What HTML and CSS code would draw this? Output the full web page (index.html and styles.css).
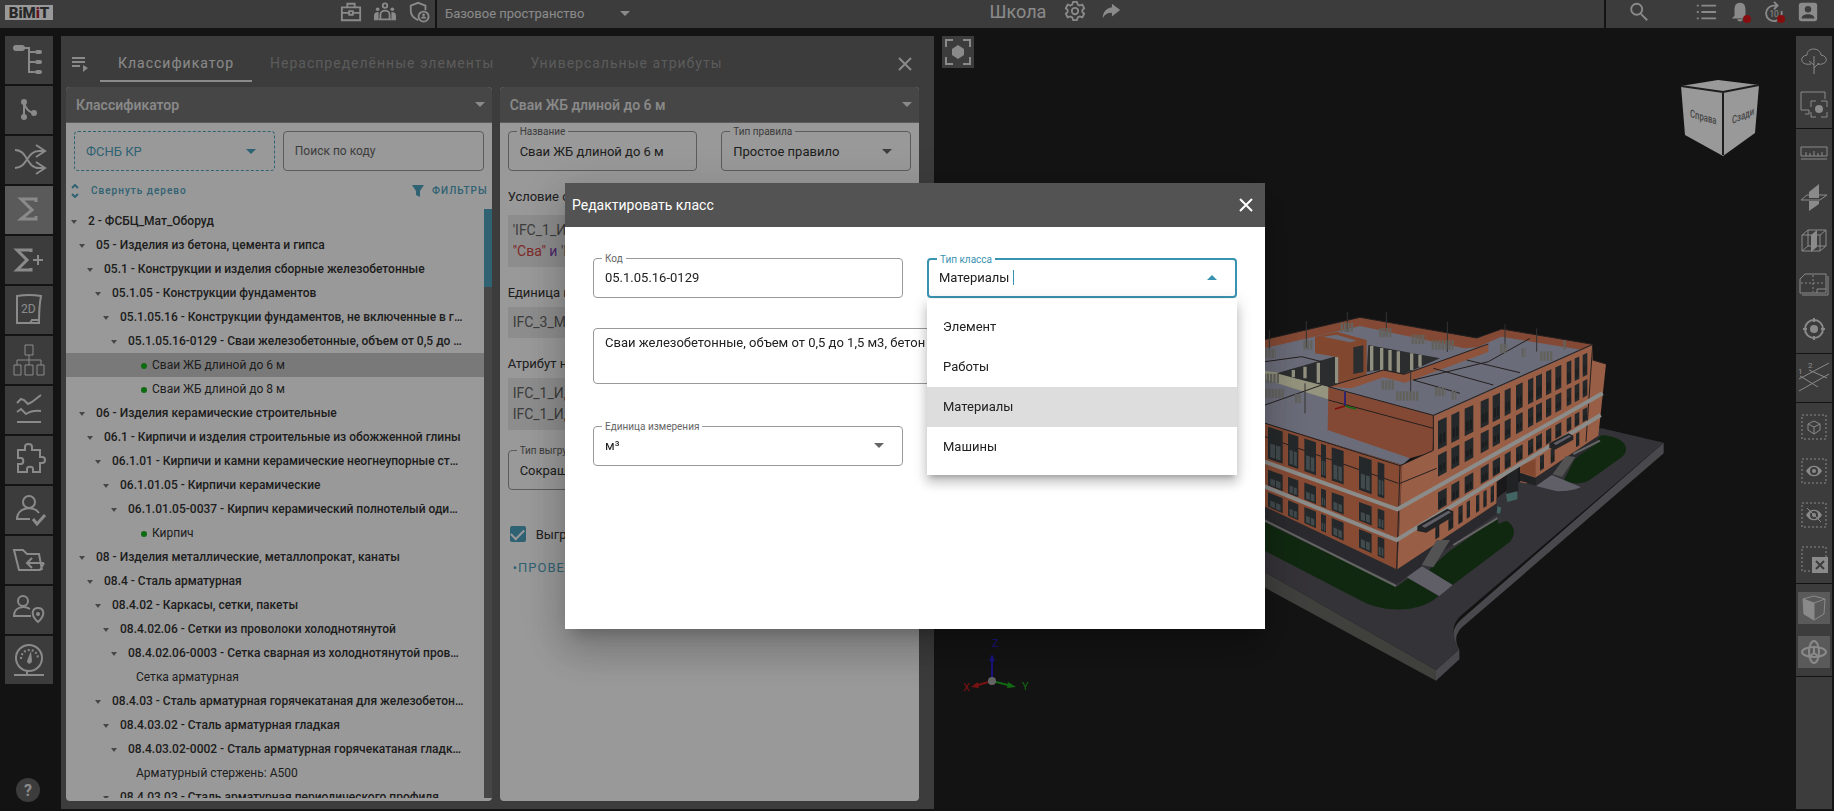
FILE: index.html
```html
<!DOCTYPE html>
<html lang="ru">
<head>
    <meta charset="UTF-8">
    <meta name="viewport" content="width=device-width, initial-scale=1.0">
    <title>BiMiT</title>
    <link rel="stylesheet" href="styles.css">
</head>
<body>
    <div class="app">
        <header class="topbar">
            <div class="topbar-left">
                <a class="logo" href="#">B<span>i</span>M<span class="dot-i">i</span>T</a>
                <div class="topbar-icons">
                    <button aria-label="Портфель"><svg viewBox="0 0 24 24"><path d="M2 7h20v14H2zM8 7V3h8v4M2 13h8M14 13h8M10 11h4v4h-4z"/></svg></button>
                    <button aria-label="Команда"><svg viewBox="0 0 24 24"><circle cx="12" cy="5" r="2.500"/><path d="M7 20v-5c0-6 10-6 10 0v5M5 20h14" /><path class="fill" d="M0 21v-5c0-3 2-4 5-4v9zM24 21v-5c0-3-2-4-5-4v9z"/><circle class="fill" cx="4" cy="9" r="2"/><circle class="fill" cx="20" cy="9" r="2"/></svg></button>
                    <button aria-label="Безопасность"><svg viewBox="0 0 24 24"><path d="M11 21C5 18 3 15 3 11V5l8-3 8 3v5"/><circle cx="17" cy="17" r="5.500"/><circle class="fill" cx="17" cy="15" r="1.500"/><path class="fill" d="M14 19c1-3 5-3 6 0z"/></svg></button>
                </div>
            </div>
            <button class="space">Базовое пространство <i class="tri"></i></button>
            <div class="project">
                <span>Школа</span>
                <button aria-label="Настройки"><svg viewBox="0 0 24 24"><path d="M10 2h4l1 3 2 1 3-1 2 4-2 2v2l2 2-2 4-3-1-2 1-1 3h-4l-1-3-2-1-3 1-2-4 2-2v-2L2 9l2-4 3 1 2-1z"/><circle cx="12" cy="12" r="3.500"/></svg></button>
                <button aria-label="Поделиться"><svg viewBox="0 0 24 24"><path class="fill" d="M13 4l9 7-9 7v-4c-5 0-8 2-10 6 0-7 4-11 10-12z"/></svg></button>
            </div>
            <div class="topbar-right">
                <button class="search" aria-label="Поиск"><svg viewBox="0 0 24 24"><circle cx="9.500" cy="9" r="6"/><path d="M14 14l7 7"/></svg></button>
                <button aria-label="Список"><svg viewBox="0 0 24 24"><path d="M7 5h16M7 12h16M7 19h16M2 5h2M2 12h2M2 19h2"/></svg></button>
                <button aria-label="Уведомления"><svg viewBox="0 0 24 24"><path class="fill" d="M12 2c5 0 6 4 6 8v6l3 3H3l3-3v-6c0-4 1-8 6-8zM9 20h6c0 3-6 3-6 0z"/></svg><i class="badge"></i></button>
                <button aria-label="История"><svg viewBox="0 0 24 24"><path d="M12 5a8.500 8.500 0 1 0 8 6M12 5h3M12 1l4 4-4 4"/><text x="7" y="17">10</text></svg><i class="badge"></i></button>
                <button aria-label="Профиль"><svg viewBox="0 0 24 24"><rect class="fill" x="2" y="2" width="20" height="20" rx="3"/><circle class="hole" cx="12" cy="9" r="3.500"/><path class="hole" d="M5 19c0-6 14-6 14 0z"/></svg></button>
            </div>
        </header>

        <main class="workspace">
            <nav class="sidebar">
                <button aria-label="Структура"><svg viewBox="0 0 48 48"><rect class="fill" x="8" y="9" width="12" height="6" rx="3"/><path d="M18 12h6v24h6M24 16h6M24 26h6"/><rect class="fill" x="30" y="14" width="7" height="4" rx="2"/><rect class="fill" x="30" y="24" width="7" height="4" rx="2"/><rect class="fill" x="30" y="34" width="7" height="4" rx="2"/></svg></button>
                <button aria-label="Ветви"><svg viewBox="0 0 48 48"><path d="M19 16v15M19 16q2 9 9 11"/><circle class="fill" cx="19" cy="16" r="3"/><circle class="fill" cx="19" cy="31" r="3"/><circle class="fill" cx="29" cy="27" r="3"/></svg></button>
                <button aria-label="Сопоставление"><svg viewBox="0 0 48 48"><path d="M10 14c13 0 11 18 24 18h5M10 32c13 0 11-17 24-17h5M31 9l9 6-9 6M31 26l9 6-9 6"/></svg></button>
                <button class="active" aria-label="Классификатор"><svg viewBox="0 0 48 48"><path class="thick" d="M31 16v-3H16l11 11-11 9h15v-3"/></svg></button>
                <button aria-label="Добавить сумму"><svg viewBox="0 0 48 48"><path class="thick" d="M26 16v-2H12l10 10-10 10h14v-2"/><path d="M28 24h10M33 19v10"/></svg></button>
                <button aria-label="2D"><svg viewBox="0 0 48 48"><path d="M12 10q12-2 24 0-2 10-2 27H12zM25 37l2-3h7"/><text x="16" y="27">2D</text></svg></button>
                <button aria-label="Схема"><svg class="thin" viewBox="0 0 48 48"><path d="M20 9h8v10h-8zM24 19v10M12 29v-5h24v5M9 29h7v10H9zM20 29h8v10h-8zM32 29h7v10h-7z"/></svg></button>
                <button aria-label="Графики"><svg viewBox="0 0 48 48"><path d="M12 17l4-4 3 1 4 4 4-2 9-7M12 26l4-3 5 5q6-4 15-3M12 36h24"/></svg></button>
                <button aria-label="Модули"><svg viewBox="0 0 48 48"><path d="M13 14h7v-3c0-4 7-4 7 0v3h8v7h2c4 0 4 6 0 6h-2v9h-7v-3c0-3-6-3-6 0v3h-9v-8h3c3 0 3-6 0-6h-3z"/></svg></button>
                <button aria-label="Проверка"><svg viewBox="0 0 48 48"><circle cx="24" cy="16" r="6"/><path d="M25 33H12c0-12 17-14 22-6"/><path class="thick" d="M28 33l4 5 8-9"/></svg></button>
                <button aria-label="Файлы"><svg viewBox="0 0 48 48"><path d="M39 27l-4 7H14L9 14h9l4 4h12l3 16M39 27H22M27 22l-5 5 5 5"/></svg></button>
                <button aria-label="Исполнители"><svg viewBox="0 0 48 48"><circle cx="18" cy="15" r="5"/><path d="M26 30H9c0-9 10-11 16-7M33 36c-9-8-5-14 0-14s9 6 0 14z"/><circle class="fill" cx="33" cy="28" r="2"/></svg></button>
                <button aria-label="Показатели"><svg viewBox="0 0 48 48"><circle cx="24" cy="22" r="13"/><path d="M22 35v4M9 39h30"/><path class="dash" d="M16 23c0-12 17-12 17 0"/><path class="fill" d="M26 15l1 10c-1 4-5 3-5 0z"/></svg></button>
                <button class="help" aria-label="Справка">?</button>
            </nav>

            <section class="panel">
                <div class="tabs">
                    <button class="tabs-menu" aria-label="Меню"><svg viewBox="0 0 16 16"><path d="M0 2h13M0 6h13M0 10h8"/><path class="fill" d="M11 9l5 3-5 4z"/></svg></button>
                    <button class="tab active">Классификатор</button>
                    <button class="tab">Нераспределённые элементы</button>
                    <button class="tab">Универсальные атрибуты</button>
                    <button class="close" aria-label="Закрыть"><svg viewBox="0 0 14 14"><path d="M1 1l12 12M13 1L1 13"/></svg></button>
                </div>
                <div class="cards">
                    <section class="card card-tree">
                        <h2>Классификатор <i class="tri"></i></h2>
                        <div class="filters">
                            <div class="field dashed">
                                <select aria-label="Классификатор"><option>ФСНБ КР</option></select>
                                <i class="tri"></i>
                            </div>
                            <div class="field">
                                <input type="text" placeholder="Поиск по коду" aria-label="Поиск по коду">
                            </div>
                        </div>
                        <div class="tree-tools">
                            <button class="collapse"><svg viewBox="0 0 8 14"><path d="M1 4l3-3 3 3M1 10l3 3 3-3"/></svg>Свернуть дерево</button>
                            <button class="filter"><svg viewBox="0 0 12 12"><path class="fill" d="M0 0h12L8 6v6l-4-2V6z"/></svg>ФИЛЬТРЫ</button>
                        </div>
                        <div class="tree-wrap">
                            <ul class="tree">
                                <li class="l0">2 - ФСБЦ_Мат_Оборуд</li>
                                <li class="l1">05 - Изделия из бетона, цемента и гипса</li>
                                <li class="l2">05.1 - Конструкции и изделия сборные железобетонные</li>
                                <li class="l3">05.1.05 - Конструкции фундаментов</li>
                                <li class="l4">05.1.05.16 - Конструкции фундаментов, не включенные в группы</li>
                                <li class="l5">05.1.05.16-0129 - Сваи железобетонные, объем от 0,5 до 1,5 м3</li>
                                <li class="leaf rule selected">Сваи ЖБ длиной до 6 м</li>
                                <li class="leaf rule">Сваи ЖБ длиной до 8 м</li>
                                <li class="l1">06 - Изделия керамические строительные</li>
                                <li class="l2">06.1 - Кирпичи и изделия строительные из обожженной глины</li>
                                <li class="l3">06.1.01 - Кирпичи и камни керамические неогнеупорные строительные</li>
                                <li class="l4">06.1.01.05 - Кирпичи керамические</li>
                                <li class="l5">06.1.01.05-0037 - Кирпич керамический полнотелый одинарный</li>
                                <li class="leaf rule">Кирпич</li>
                                <li class="l1">08 - Изделия металлические, металлопрокат, канаты</li>
                                <li class="l2">08.4 - Сталь арматурная</li>
                                <li class="l3">08.4.02 - Каркасы, сетки, пакеты</li>
                                <li class="l4">08.4.02.06 - Сетки из проволоки холоднотянутой</li>
                                <li class="l5">08.4.02.06-0003 - Сетка сварная из холоднотянутой проволоки</li>
                                <li class="leaf">Сетка арматурная</li>
                                <li class="l3">08.4.03 - Сталь арматурная горячекатаная для железобетонных</li>
                                <li class="l4">08.4.03.02 - Сталь арматурная гладкая</li>
                                <li class="l5">08.4.03.02-0002 - Сталь арматурная горячекатаная гладкая</li>
                                <li class="leaf">Арматурный стержень: А500</li>
                                <li class="l4">08.4.03.03 - Сталь арматурная периодического профиля</li>
                            </ul>
                            <div class="scroll"><i></i></div>
                        </div>
                    </section>

                    <section class="card card-rule">
                        <h2>Сваи ЖБ длиной до 6 м <i class="tri"></i></h2>
                        <div class="rule-body">
                            <div class="rule-row">
                                <div class="field">
                                    <label for="name">Название</label>
                                    <input id="name" type="text" value="Сваи ЖБ длиной до 6 м">
                                </div>
                                <div class="field">
                                    <label for="kind">Тип правила</label>
                                    <select id="kind"><option>Простое правило</option></select>
                                    <i class="tri"></i>
                                </div>
                            </div>
                            <h3>Условие отбора</h3>
                            <div class="code">'IFC_1_Имя' =<br><span class="str">"Сва"</span> <span class="op">и</span> 'IFC_1'</div>
                            <h3>Единица измерения</h3>
                            <div class="code">IFC_3_Материал</div>
                            <h3>Атрибут наименования</h3>
                            <div class="code">IFC_1_Идентификатор<br>IFC_1_Идентификатор</div>
                            <div class="field export">
                                <label for="export">Тип выгрузки</label>
                                <select id="export"><option>Сокращённый</option></select>
                            </div>
                            <label class="check"><input type="checkbox" checked>Выгружать</label>
                            <button class="verify">•ПРОВЕРИТЬ</button>
                        </div>
                    </section>
                </div>
            </section>

            <section class="viewer">
                <button class="focus" aria-label="Фокус"><svg viewBox="0 0 32 32"><path d="M4 11V4h7M21 4h7v7M28 21v7h-7M11 28H4v-7"/><path class="fill" d="M16 9l6 4v6l-6 4-6-4v-6z"/></svg></button>
                <svg class="cube" viewBox="0 0 80 78">
                    <path class="face" d="M1 7L38 1l41 5-4 48-32 23L5 56z"/>
                    <path class="edge" d="M1 7l42 6 36-7M43 13v63"/>
                    <text transform="matrix(.7 .2 0 1 10 38)">Справа</text>
                    <text transform="matrix(.7 -.3 0 1 52 45)">Сзади</text>
                </svg>
                <svg class="model" viewBox="0 0 1320 1200">
                    <!-- ground slab -->
                    <path fill="#6b6b67" d="M60 838L588 1140v32L60 885z"/>
                    <path fill="#7b7b80" d="M588 1140l70-62v30l-70 64zM658 1085c-25-45-25-70 10-100L1271 458v32L680 1000c-40 30-35 55-22 80z"/>
                    <path fill="#58555d" d="M60 600L1085 415l186 43L668 972c-35 30-35 62-10 106l-70 62L60 838z"/>
                    <path fill="#1b431b" d="M60 690l410 200 35-25 90 53c-50 50-160 52-230 15L60 775zM770 685c50 5 65 40 40 70L638 885l-72-45 60-55zM1085 435c70 5 88 40 62 65l-95 68c-20 16-55 16-80 2l30-60z"/>
                    <path fill="#a09fae" d="M500 862l45-34 93 57-40 33zM885 588l45-35 92 38c-30 18-110 16-137-3z"/>
                    <!-- plinth and facades -->
                    <path fill="#47474d" d="M60 640l410 198 605-401v20L470 882 60 684z"/>
                    <path class="strip" d="M60 684l408 204M640 765l145-88M1000 492l80-40"/>
                    <path fill="#e17d58" d="M60 395l427 130-17 313L60 643z"/>
                    <path fill="#ff9e76" d="M487 525l93-45V378l478-213v45l40 12-23 215-305 203-298 198z"/>
                    <path fill="#2a2a2e" d="M770 575l70-48v95l-70 45z"/>
                    <path fill="#58555d" d="M770 665l0-40 65-50 50 12 60 15-70 60-100 40z"/>
                    <path fill="#d9784f" d="M840 527l47-20v55l-47-15z"/>
                    <path fill="#38393c" d="M800 545l35-20v80l-35 10zM840 548l47 15v22l-47-12z"/>
                    <path fill="#6fa9a5" d="M798 612l34-8v24l-30 8zM772 648l12 5-4 18-10-2z"/>
                    <!-- roofs -->
                    <path fill="#b2b4ca" d="M60 155L360 85l350 62 75-27 273 45-478 213-70 122 5 0-28 25L60 395z"/>
                    <path fill="#dc7b58" d="M60 152L360 82v26L60 178zM360 82l350 62 75-27 273 46-30 17-245-40-70 32-40 3-313-67z"/>
                    <path fill="#f8f7d2" d="M60 240l70 10 138 40-3 38-110-35-95-30z"/>
                    <path fill="#484b4d" d="M110 250l180-52v83l-25 9-100-25zM385 165l215 40-110 48-60-13-50 5z"/>
                    <path class="cream" d="M395 168v74M425 174v66M450 180v62M475 184v64M515 190v50M540 194v36M160 240v22M195 230v35M235 218v60M290 200v80"/>
                    <path fill="#d9784f" d="M225 140l65-15 90 25v110l-85 20v-78l-70-12z"/>
                    <path fill="#484b4d" d="M340 172l30-6v80l-30 6z"/>
                    <path fill="#b2b4ca" d="M250 140l40-6 60 18-20 5z"/>
                    <path fill="#dc7b58" d="M265 292l317 84-4 109-68 20-247-85z"/>
                    <path fill="#ee8b64" d="M265 290l165-50 62 13 253-91v24L495 278l-65-16-95 33z"/>
                    <path class="line" d="M60 152L360 82l350 62 75-27 273 46-478 213-315-86 165-50 62 13 253-91M60 395l420 132 98-45M580 376v106M480 527l-10 311M75 215l110-15 60 15M520 270l140 40M580 235l180 50M680 210l160 38M520 270L745 215l125-70M75 345l170-60M265 330l315 85M480 580l110-45M75 440l400 140M1058 165l-20 290M1098 222l-40-12"/>
                    <!-- windows are added by the script below -->
                    <g id="windows"></g>
                    <path class="band" d="M60 510l412 148 616-348M60 584l410 166 612-375"/>
                    <path fill="#3b3c40" d="M532 708l90-52 17 8v16l-80 48-27-5zM928 460l58-30 14 7v12l-55 30-17-5z"/>
                    <path fill="#a09fae" d="M545 708l80-46 8 5-78 46zM940 460l48-25 6 4-46 26z"/>
                    <path fill="#8a8a8c" d="M545 825l45-75 40 0-50 82zM938 552l40-55 28 4-40 60z"/>
                    <!-- roof equipment -->
                    <path class="pole" d="M88 120v60M199 93v80M322 66v60M439 66v70M622 96v90M795 103v70M890 115v70M195 280v90M512 240v80"/>
                    <path class="units" d="M302 112h40M418 128h36M515 148h42M575 165h66M190 165h30M75 190h32M900 198h40M845 188h12M970 165h10M585 305h32M635 315h14M468 318h70M425 285h40M75 310h56M165 325h20M70 265h50M780 175h22"/>
                    <path stroke="#3a2fd0" stroke-width="5" d="M315 305v43"/>
                    <path stroke="#d01818" stroke-width="5" d="M315 348l-30 9"/>
                    <path stroke="#20b020" stroke-width="5" d="M315 348l33 9"/>
                </svg>
                <svg class="axes" viewBox="0 0 80 60">
                    <path stroke="#2a22d8" d="M32 42V20"/><path fill="#2a22d8" d="M32 15l3 7h-6z"/>
                    <path stroke="#c81e1e" d="M32 42l-14 4"/><path fill="#c81e1e" d="M11 48l7-5 1 6z"/>
                    <path stroke="#1fae1f" d="M32 42l16 4"/><path fill="#1fae1f" d="M56 48l-8-5-1 6z"/>
                    <circle cx="32" cy="42" r="4" fill="#a9a9a9"/>
                    <text x="32" y="8" fill="#2a22d8">Z</text>
                    <text x="3" y="52" fill="#c81e1e">X</text>
                    <text x="62" y="51" fill="#1fae1f">Y</text>
                </svg>
            </section>

            <aside class="toolbar">
                <div>
                    <button aria-label="Дерево"><svg viewBox="0 0 32 32"><path d="M13 20c-11 2-12-8-4-9 0-8 13-8 14 0 8 1 7 11-4 9M16 30V12M16 21l-5-4M16 24l5-5"/></svg></button>
                    <button aria-label="Выделение"><svg viewBox="0 0 32 32"><path d="M27 11V4H3v18h8v4h-4M13 19v-6h5M23 13h6v6M29 24v5h-6M18 29h-5v-5"/><circle class="fill" cx="21" cy="21" r="4"/></svg></button>
                </div>
                <div>
                    <button aria-label="Линейка"><svg viewBox="0 0 32 32"><path d="M3 10h26v9H3zM3 22h26M8 19v-4M12 19v-3M16 19v-5M20 19v-3M24 19v-4"/></svg></button>
                    <button aria-label="Сечение"><svg viewBox="0 0 32 32"><path d="M3 19l6-5h20l-7 5z"/><path class="fill" d="M11 11l10-8v14H11zM11 20h10v3l-10 7z"/></svg></button>
                    <button aria-label="Объём"><svg viewBox="0 0 32 32"><path d="M4 10h18v16H4zM4 10l6-5h18v16l-6 5M22 10l6-5M10 5v16h18M4 26l6-5"/><path class="fill" d="M13 10l6-5v17l-6 5z"/></svg></button>
                    <button aria-label="План"><svg viewBox="0 0 32 32"><path d="M7 5h21v19H2V10zM19 24v-4h9M4 26h26V7"/><path class="dash" d="M15 6v17M3 14h24"/></svg></button>
                    <button aria-label="Цель"><svg class="bold" viewBox="0 0 32 32"><circle cx="16" cy="16" r="9"/><circle class="fill" cx="16" cy="16" r="4"/><path d="M16 5v4M16 23v4M5 16h4M23 16h4"/></svg></button>
                </div>
                <div>
                    <button aria-label="Оси"><svg viewBox="0 0 32 32"><path d="M1 17L31 1M1 29L31 12M11 8l18 8M2 14l18 11"/><text x="10" y="6">2</text><text x="0" y="12">1</text></svg></button>
                </div>
                <div>
                    <button aria-label="Объект"><svg viewBox="0 0 32 32"><path class="dash" d="M4 4h24v24H4z"/><path d="M16 10l6 3v6l-6 4-6-4v-6zM10 13l6 3 6-3M16 16v7"/></svg></button>
                    <button aria-label="Показать"><svg viewBox="0 0 32 32"><path class="dash" d="M4 4h24v24H4z"/><path class="fill" d="M8 16c4-7 12-7 16 0-4 7-12 7-16 0z"/><circle class="ring" cx="16" cy="16" r="3"/></svg></button>
                    <button aria-label="Скрыть"><svg viewBox="0 0 32 32"><path class="dash" d="M4 4h24v24H4z"/><path class="fill" d="M8 16c4-7 12-7 16 0-4 7-12 7-16 0z"/><circle class="ring" cx="16" cy="16" r="3"/><path d="M9 9l14 14"/></svg></button>
                    <button aria-label="Сбросить"><svg viewBox="0 0 32 32"><path class="dash" d="M4 4h24v24H4z"/><path class="fill" d="M14 14h16v16H14z"/><path class="ring" d="M18 18l8 8M26 18l-8 8"/></svg></button>
                </div>
                <div>
                    <button class="active" aria-label="Куб"><svg viewBox="0 0 32 32"><path d="M5 7l11-3 11 3-1 15-10 6-10-6zM5 7l11 4 11-4M16 11v17"/><path class="fill" d="M5 7l11 4v17L6 22z"/></svg></button>
                    <button class="active" aria-label="Орбита"><svg class="bold" viewBox="0 0 32 32"><ellipse cx="16" cy="16" rx="12" ry="5"/><ellipse cx="16" cy="16" rx="5" ry="11"/><path d="M16 12v5l-4 3M16 17l4 3"/></svg></button>
                </div>
                <div class="rest"></div>
            </aside>
        </main>
    </div>

    <div class="overlay">
        <form class="modal" role="dialog" aria-labelledby="modal-title">
            <header>
                <h1 id="modal-title">Редактировать класс</h1>
                <button type="button" aria-label="Закрыть"><svg viewBox="0 0 14 14"><path d="M1 1l12 12M13 1L1 13"/></svg></button>
            </header>
            <div class="modal-body">
                <div class="field">
                    <label for="code">Код</label>
                    <input id="code" type="text" value="05.1.05.16-0129">
                </div>
                <div class="field focused">
                    <label for="type">Тип класса</label>
                    <input id="type" type="text" role="combobox" aria-expanded="true" value="Материалы">
                    <i class="cursor"></i>
                    <i class="tri up"></i>
                    <ul class="menu" role="listbox">
                        <li role="option">Элемент</li>
                        <li role="option">Работы</li>
                        <li class="selected" role="option" aria-selected="true">Материалы</li>
                        <li role="option">Машины</li>
                    </ul>
                </div>
                <div class="field area">
                    <textarea aria-label="Описание">Сваи железобетонные, объем от 0,5 до 1,5 м3, бетон</textarea>
                </div>
                <div class="field">
                    <label for="unit">Единица измерения</label>
                    <select id="unit"><option>м³</option></select>
                    <i class="tri"></i>
                </div>
            </div>
        </form>
    </div>

    <script>
        const windows = document.getElementById("windows");

        // height of a facade line at x, line is [x1, y1, x2, y2]
        function lineY(l, x){
            return l[1] + (l[3] - l[1]) * (x - l[0]) / (l[2] - l[0]);
        }

        function addPane(top, bottom, x1, x2, from, to, color){
            const y = (x, t) => lineY(top, x) + (lineY(bottom, x) - lineY(top, x)) * t;
            const pane = document.createElementNS("http://www.w3.org/2000/svg", "polygon");
            pane.setAttribute("points", [x1, y(x1, from), x2, y(x2, from), x2, y(x2, to), x1, y(x1, to)].join(" "));
            pane.setAttribute("fill", color);
            windows.appendChild(pane);
        }

        function addFacade(lines, columns, rows, glass){
            for(const [x1, x2] of columns){
                for(const [i, from, to] of rows){
                    const mid = from + (to - from) * 0.5;
                    const gap = (x2 - x1) * 0.15;
                    addPane(lines[i], lines[i + 1], x1, x2, from, to, "#3f4446");
                    addPane(lines[i], lines[i + 1], x1 + gap, (x1 + x2) / 2 - 1, mid, to - 0.06, glass);
                    addPane(lines[i], lines[i + 1], (x1 + x2) / 2 + 2, x2 - gap, mid, to - 0.06, glass);
                }
            }
        }

        const left = [[75, 400, 475, 528], [75, 520, 475, 658], [75, 592, 475, 748], [75, 655, 475, 838]];
        addFacade(left,
            [[84, 128], [144, 175], [193, 228], [243, 258], [275, 311], [357, 395], [413, 433]],
            [[0, 0.06, 0.86], [1, 0.22, 0.88], [2, 0.18, 0.86]], "#6d7c80");

        const right = [[580, 378, 1058, 165], [470, 655, 1088, 310], [470, 750, 1080, 375], [470, 838, 1075, 437]];
        addFacade(right,
            [[594, 620], [634, 658], [674, 700], [722, 746], [758, 780], [794, 812], [828, 848], [864, 880], [888, 906], [918, 934], [946, 964], [980, 994], [1004, 1018], [1028, 1042]],
            [[0, 0.1, 0.5], [0, 0.58, 0.88], [1, 0.25, 0.85]], "#2c2f31");
        addFacade(right,
            [[586, 598], [625, 640], [655, 668], [680, 690], [708, 718], [730, 740], [752, 762], [900, 912], [932, 944], [1008, 1018]],
            [[2, 0.2, 0.85]], "#2c2f31");
    </script>
</body>
</html>
```
FILE: styles.css
```css
*{
    box-sizing: border-box;
}

:root{
    --accent: #4fa3bf;
    --bar: #646464;
    --dark: #212121;
    --light: #e6e6e6;
}

body{
    margin: 0;
    background-color: var(--dark);
    font-family: Roboto, "Liberation Sans", sans-serif;
    font-size: 13px;
    color: #333;
}

button, input, select, textarea{
    font: inherit;
    color: inherit;
    border: 0;
    padding: 0;
    background: none;
    outline: none;
}

h1, h2, h3, ul{
    margin: 0;
    padding: 0;
    list-style: none;
}

svg{
    display: block;
    fill: none;
    stroke: currentColor;
    stroke-width: 2;
}

svg .fill, svg text{
    fill: currentColor;
    stroke: none;
}

svg .dash{
    stroke-dasharray: 2 2;
}

.tri{
    flex: none;
    border: 5px solid transparent;
    border-top-color: currentColor;
    border-bottom-width: 0;
}

.tri.up{
    border-top-width: 0;
    border-bottom: 5px solid currentColor;
}

.app{
    display: flex;
    flex-direction: column;
    gap: 8px;
    height: 100vh;
    padding-bottom: 2px;
    overflow: hidden;
}

/* top bar */
.topbar{
    display: flex;
    flex: 0 0 28px;
    background-color: var(--bar);
    color: var(--light);
}

.topbar button{
    position: relative;
}

.topbar svg{
    width: 22px;
    height: 22px;
}

.topbar text{
    font-size: 9px;
}

.topbar .hole{
    fill: var(--bar);
    stroke: none;
}

.topbar-left{
    display: flex;
    justify-content: space-between;
    width: 437px;
    padding: 0 5px 4px;
    border-right: 2px solid var(--dark);
}

.logo{
    align-self: center;
    width: 48px;
    height: 15px;
    background-color: #fff;
    color: #444;
    font-size: 15px;
    font-weight: 900;
    line-height: 16px;
    text-align: center;
    text-decoration: none;
}

.dot-i{
    color: #b02030;
}

.topbar-icons{
    display: flex;
    align-items: center;
    gap: 12px;
}

.space{
    display: flex;
    align-items: center;
    justify-content: space-between;
    width: 193px;
    padding: 0 0 2px 8px;
}

.project{
    display: flex;
    flex: 1;
    align-items: center;
    justify-content: center;
    gap: 14px;
    padding: 0 122px 6px 0;
    font-size: 18px;
}

.project span{
    margin-right: 4px;
}

.topbar-right{
    display: flex;
    align-items: center;
    gap: 12px;
    width: 230px;
    padding: 0 15px 5px 22px;
    border-left: 2px solid var(--dark);
}

.search{
    margin-right: auto;
}

.badge{
    position: absolute;
    right: 0;
    bottom: 0;
    width: 8px;
    height: 8px;
    border-radius: 50%;
    background-color: #e01818;
}

.workspace{
    display: flex;
    flex: 1;
    min-height: 0;
}

/* left buttons */
.sidebar{
    display: flex;
    flex-direction: column;
    gap: 2px;
    width: 61px;
    padding: 0 8px 7px 5px;
    color: var(--light);
}

.sidebar button{
    flex: 0 0 48px;
    background-color: var(--bar);
}

.sidebar .active, .toolbar .active{
    background-color: #969696;
}

.sidebar .thick{
    stroke-width: 3;
}

.sidebar .thin{
    stroke-width: 1;
}

.sidebar text{
    font-size: 12px;
}

.sidebar .help{
    flex-basis: 24px;
    width: 24px;
    margin: auto auto 0 11px;
    border-radius: 50%;
    font-size: 16px;
    font-weight: 700;
}

/* classifier panel */
.panel{
    display: flex;
    flex-direction: column;
    width: 47.6vw;
    padding: 0 15px 8px 5px;
    background-color: var(--bar);
}

.tabs{
    display: flex;
    flex: 0 0 51px;
    align-items: flex-start;
    padding: 10px 7px 0 6px;
    color: var(--light);
}

.tabs-menu{
    width: 28px;
    height: 36px;
}

.tabs-menu svg{
    width: 16px;
    height: 16px;
}

.tab{
    height: 36px;
    padding: 0 18px;
    border-bottom: 2px solid transparent;
    color: #999;
    font-size: 14px;
    letter-spacing: 1px;
}

.tab.active{
    border-color: var(--light);
    color: var(--light);
}

.close{
    height: 36px;
    margin-left: auto;
}

.close svg{
    width: 14px;
    height: 14px;
}

.cards{
    display: flex;
    flex: 1;
    gap: 8px;
    min-height: 0;
}

.card{
    display: flex;
    flex: 1;
    flex-direction: column;
    border-radius: 4px;
    background-color: #fff;
    overflow: hidden;
}

.card-tree{
    flex: 0 0 49.9%;
}

.card h2{
    display: flex;
    flex: 0 0 36px;
    align-items: center;
    justify-content: space-between;
    padding: 0 7px 0 10px;
    border-bottom: 1px solid #999;
    background-color: #757575;
    color: var(--light);
    font-size: 14px;
    font-weight: 500;
}

/* outlined fields */
.field{
    position: relative;
    display: flex;
    align-items: center;
    height: 40px;
    padding: 0 18px 0 11px;
    border: 1px solid #999;
    border-radius: 4px;
    color: #333;
}

.field label{
    position: absolute;
    top: -6px;
    left: 8px;
    padding: 0 3px;
    background-color: #fff;
    color: #666;
    font-size: 10px;
    line-height: 12px;
}

.field input, .field select, .field textarea{
    flex: 1;
    width: 100%;
    min-width: 0;
    appearance: none;
    resize: none;
}

.field .tri{
    color: #666;
}

.filters{
    display: grid;
    grid-template-columns: 1fr 1fr;
    gap: 8px;
    padding: 8px;
}

.filters input{
    font-size: 12px;
}

.filters ::placeholder{
    color: #666;
    opacity: 1;
}

.field.dashed, .field.dashed .tri{
    border-color: var(--accent);
    border-style: dashed;
    color: var(--accent);
}

.field.dashed .tri{
    border-style: solid;
    border-color: var(--accent) transparent transparent;
}

.tree-tools{
    display: flex;
    justify-content: space-between;
    padding: 4px 4px 10px 5px;
    color: var(--accent);
    font-size: 10px;
    font-weight: 500;
    line-height: 16px;
}

.tree-tools button{
    display: flex;
    align-items: center;
    gap: 8px;
    letter-spacing: 1px;
}

.tree-tools .collapse{
    gap: 12px;
}

.collapse svg{
    width: 8px;
    height: 14px;
}

.filter svg{
    width: 12px;
    height: 12px;
}

.tree-wrap{
    display: flex;
    flex: 1;
    min-height: 0;
    margin-bottom: 3px;
}

.tree{
    flex: 1;
    min-width: 0;
    overflow: hidden;
    font-size: 12px;
}

.tree li{
    padding-right: 20px;
    font-weight: 500;
    line-height: 24px;
    white-space: nowrap;
    overflow: hidden;
    text-overflow: ellipsis;
}

.tree li:not(.leaf)::before{
    content: "";
    display: inline-block;
    margin-right: 11px;
    border: 3px solid transparent;
    border-top: 4px solid #777;
    border-bottom: 0;
    vertical-align: middle;
}

.l0{ padding-left: 5px; }
.l1{ padding-left: 13px; }
.l2{ padding-left: 21px; }
.l3{ padding-left: 29px; }
.l4{ padding-left: 37px; }
.l5{ padding-left: 45px; }

.tree .leaf{
    padding-left: 70px;
    font-weight: 400;
}

.tree .rule::before{
    content: "";
    display: inline-block;
    width: 6px;
    height: 6px;
    margin: 0 5px;
    border-radius: 50%;
    background-color: #19b219;
    vertical-align: middle;
}

.tree .selected{
    background-color: #cacaca;
}

.scroll{
    width: 8px;
    background-color: #757575;
}

.scroll i{
    display: block;
    height: 78px;
    background-color: var(--accent);
}

/* rule card */
.rule-body{
    padding: 8px;
}

.rule-row{
    display: grid;
    grid-template-columns: 1fr 1fr;
    gap: 24px;
}

.rule-body h3{
    margin-top: 18px;
    padding-bottom: 6px;
    font-size: 13px;
    font-weight: 400;
    line-height: 16px;
    white-space: nowrap;
}

.rule-body h3:first-of-type{
    padding-bottom: 10px;
}

.code{
    padding: 5px;
    background-color: #ebebeb;
    color: #666;
    font-size: 14px;
    line-height: 21px;
}

.str{
    color: #d64545;
}

.op{
    color: #7a3fb0;
}

.export{
    width: 189px;
    margin-top: 20px;
}

.check{
    display: flex;
    align-items: center;
    gap: 10px;
    margin: 36px 0 0 2px;
}

.check input{
    display: grid;
    place-items: center;
    width: 16px;
    height: 16px;
    margin: 0;
    border-radius: 2px;
    background-color: var(--accent);
    appearance: none;
}

.check input::before{
    content: "";
    width: 11px;
    height: 6px;
    margin-bottom: 3px;
    border: solid #fff;
    border-width: 0 0 2px 2px;
    rotate: -45deg;
}

.verify{
    margin: 18px 0 0 5px;
    color: var(--accent);
    letter-spacing: 1px;
}

/* 3d view */
.viewer{
    position: relative;
    flex: 1;
    overflow: hidden;
}

.focus{
    margin-left: 8px;
    background-color: var(--bar);
    color: var(--light);
}

.focus svg{
    width: 32px;
    height: 32px;
}

.cube{
    position: absolute;
    top: 43px;
    right: 36px;
    width: 80px;
    height: 78px;
}

.cube .face{
    fill: #fff;
    stroke: none;
}

.cube .edge{
    stroke: #333;
}

.cube text{
    fill: #777;
    font-size: 11px;
    font-weight: 500;
}

.model{
    position: absolute;
    top: 254px;
    left: calc(50% - 125px);
    width: 440px;
    height: 400px;
    stroke: none;
}

.model .strip{
    stroke: #a8a8a8;
    stroke-width: 6;
}

.model .band{
    stroke: #e8e8e4;
    stroke-width: 12;
}

.model .cream{
    stroke: #f0efd6;
    stroke-width: 10;
}

.model .line{
    stroke: #3c3434;
    stroke-width: 3;
}

.model .pole{
    stroke: #555;
    stroke-width: 3;
}

.model .units{
    stroke: #a3a29a;
    stroke-width: 28;
    stroke-dasharray: 7 3;
}

.axes{
    position: absolute;
    left: 26px;
    bottom: 110px;
    width: 80px;
    height: 60px;
    stroke: none;
}

.axes path[stroke]{
    stroke-width: 2;
}

.axes text{
    fill: revert-layer;
    font-size: 11px;
}

/* right buttons */
.toolbar{
    display: flex;
    flex-direction: column;
    gap: 1px;
    width: 38px;
    padding-right: 2px;
    color: #e6e6e6;
}

.toolbar div{
    display: flex;
    flex-direction: column;
    align-items: center;
    gap: 12px;
    padding: 8px 0;
    background-color: var(--bar);
}

.toolbar svg{
    width: 32px;
    height: 32px;
    stroke-width: 1;
}

.toolbar .bold{
    stroke-width: 2;
}

.toolbar text{
    font-size: 8px;
}

.toolbar .ring{
    stroke: var(--bar);
    stroke-width: 2;
}

.toolbar .rest{
    flex: 1;
}

/* dialog */
.overlay{
    position: fixed;
    inset: 0;
    display: flex;
    align-items: center;
    justify-content: center;
    padding-right: 4px;
    background-color: rgba(0, 0, 0, 0.4);
}

.modal{
    width: 700px;
    min-height: 446px;
    background-color: #fff;
    box-shadow: 0 11px 15px -7px rgba(0, 0, 0, 0.2), 0 24px 38px 3px rgba(0, 0, 0, 0.14), 0 9px 46px 8px rgba(0, 0, 0, 0.12);
}

.modal header{
    display: flex;
    align-items: center;
    justify-content: space-between;
    height: 44px;
    padding: 0 12px 0 7px;
    background-color: #535353;
    color: #fff;
}

.modal h1{
    font-size: 14px;
    font-weight: 400;
}

.modal header svg{
    width: 14px;
    height: 14px;
}

.modal-body{
    display: grid;
    grid-template-columns: 1fr 1fr;
    gap: 30px 24px;
    padding: 31px 28px;
}

.modal .field{
    color: #212121;
}

.modal .area{
    grid-column: 1 / -1;
    height: 56px;
    margin-bottom: 12px;
    padding-top: 6px;
    align-items: flex-start;
}

.modal .focused{
    padding-left: 10px;
    border: 2px solid #3993b0;
}

.modal .focused label, .modal .focused .tri{
    color: #3993b0;
}

.modal .focused input{
    flex: 0 0 74px;
}

.cursor{
    width: 1px;
    height: 15px;
    margin-right: auto;
    background-color: #3993b0;
}

.menu{
    position: absolute;
    top: 39px;
    left: -2px;
    right: -2px;
    z-index: 1;
    padding: 8px 0;
    background-color: #fff;
    box-shadow: 0 5px 5px -3px rgba(0, 0, 0, 0.2), 0 8px 10px 1px rgba(0, 0, 0, 0.14), 0 3px 14px 2px rgba(0, 0, 0, 0.12);
}

.menu li{
    padding: 0 16px;
    line-height: 40px;
}

.menu .selected{
    background-color: #ddd;
}
```
